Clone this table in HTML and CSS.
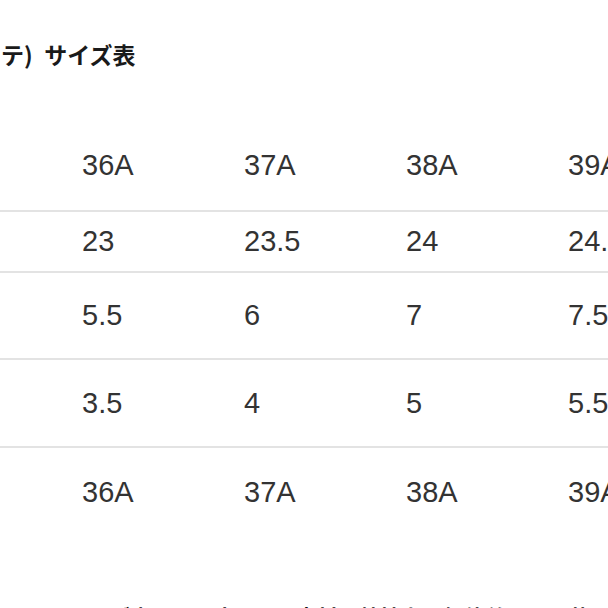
FILE: index.html
```html
<!DOCTYPE html>
<html lang="ja">
<head>
<meta charset="utf-8">
<title>サイズ表</title>
<link rel="stylesheet" href="styles.css">
</head>
<body>
<div class="page">
  <h2 class="title">ステ)&#8194;サイズ表</h2>
  <div class="table">
    <div class="row row-head">
      <div class="label">サイズ</div>
      <div class="cell">36A</div><div class="cell">37A</div><div class="cell">38A</div><div class="cell">39A</div>
    </div>
    <div class="row row-short">
      <div class="label">足長</div>
      <div class="cell">23</div><div class="cell">23.5</div><div class="cell">24</div><div class="cell">24.5</div>
    </div>
    <div class="row row-tall">
      <div class="label">ヒール高</div>
      <div class="cell">5.5</div><div class="cell">6</div><div class="cell">7</div><div class="cell">7.5</div>
    </div>
    <div class="row row-tall2">
      <div class="label">ソール</div>
      <div class="cell">3.5</div><div class="cell">4</div><div class="cell">5</div><div class="cell">5.5</div>
    </div>
    <div class="row row-last">
      <div class="label">対応</div>
      <div class="cell">36A</div><div class="cell">37A</div><div class="cell">38A</div><div class="cell">39A</div>
    </div>
  </div>
  <p class="note">※ ワンサイズ表記は目安です。素材の特性上、個体差により若干の誤差がございます。</p>
</div>
</body>
</html>
```

FILE: styles.css
```css
html, body {
  margin: 0;
  padding: 0;
  background: #ffffff;
}
body {
  width: 608px;
  height: 608px;
  overflow: hidden;
}
.page {
  width: 608px;
}
.title {
  margin: 0;
  padding-top: 39px;
  margin-left: -22px;
  font-family: "Noto Sans CJK JP", "Liberation Sans", sans-serif;
  font-weight: 700;
  font-size: 23px;
  line-height: 30px;
  color: #1a1a1a;
  white-space: nowrap;
}
.table {
  margin-top: 52px;
  margin-left: -120px;
  width: 900px;
  font-family: "Liberation Sans", Arial, sans-serif;
  font-size: 29px;
  color: #333333;
}
.row {
  display: flex;
  align-items: center;
  border-bottom: 2px solid #e3e3e3;
}
.row-head { height: 89px; }
.row-short { height: 59px; }
.row-tall { height: 85px; }
.row-tall2 { height: 86px; }
.row-last { height: 89px; border-bottom: none; }
.label {
  width: 202px;
  flex: none;
  color: transparent;
}
.cell {
  width: 162px;
  flex: none;
  white-space: nowrap;
}
.note {
  margin: 64px 0 0 0;
  font-family: "Noto Sans CJK JP", sans-serif;
  font-weight: 700;
  font-size: 21px;
  line-height: 30px;
  color: #111111;
  white-space: nowrap;
}
```
